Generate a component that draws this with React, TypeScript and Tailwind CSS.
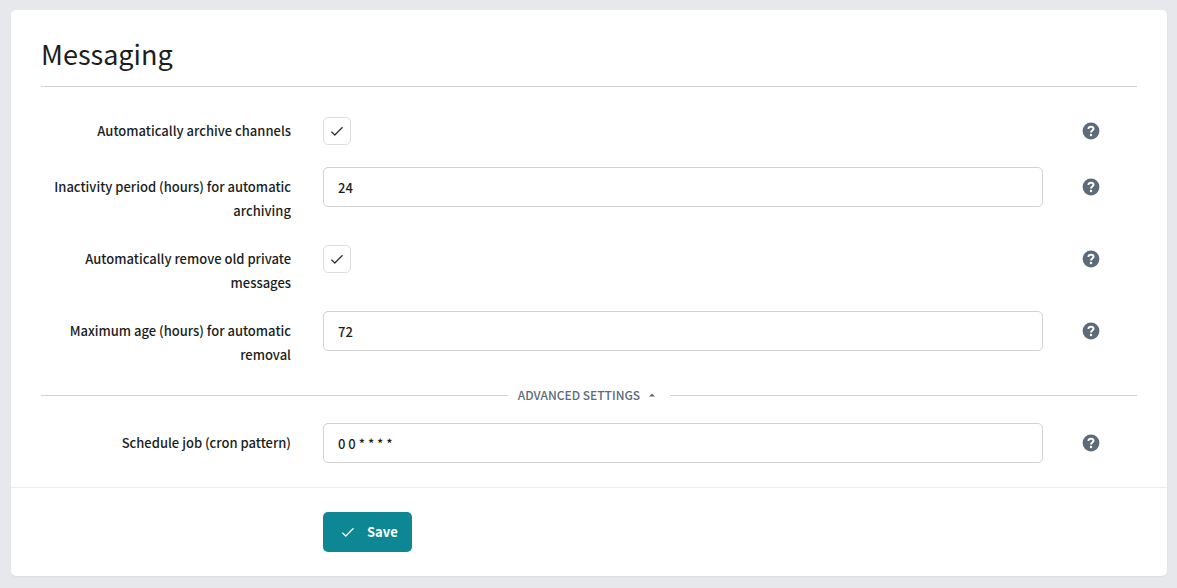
import { useId, useState } from 'react';

function CheckIcon({ className }: { className?: string }) {
  return (
    <svg viewBox="0 0 14 14" fill="none" className={className} aria-hidden="true">
      <path
        d="M1.4 7.7 L4.8 11 L12.5 3.3"
        stroke="currentColor"
        strokeWidth="1.25"
      />
    </svg>
  );
}

function HelpButton({ label }: { label: string }) {
  return (
    <button type="button" aria-label={label} className="block h-10 px-1.5 text-[#5b6b7c]">
      <svg viewBox="0 0 20 20" className="w-5 h-5" aria-hidden="true">
        <circle cx="10" cy="10" r="8.4" fill="currentColor" />
        <path
          d="M7.3 7.8 C7.5 6.4 8.5 5.7 9.9 5.7 C11.5 5.7 12.5 6.6 12.5 7.8 C12.5 9.6 10 9.5 10 11.6"
          fill="none"
          stroke="white"
          strokeWidth="2"
        />
        <circle cx="10" cy="14" r="1.25" fill="white" />
      </svg>
    </button>
  );
}

type RowProps = {
  id: string;
  label: string;
  children: React.ReactNode;
};

function Row({ id, label, children }: RowProps) {
  return (
    <div className="grid grid-cols-12 gap-x-8">
      <label htmlFor={id} className="col-span-3 pt-2 text-right leading-6">
        {label}
      </label>
      <div className="col-span-8">{children}</div>
      <HelpButton label={label} />
    </div>
  );
}

function CheckboxRow({ label }: { label: string }) {
  const id = useId();

  return (
    <Row id={id} label={label}>
      <div className="flex h-10 items-center">
        <span className="relative flex">
          <input
            id={id}
            type="checkbox"
            defaultChecked
            className="peer w-7 h-7 appearance-none rounded-[5px] border border-[#dededf] bg-white"
          />
          <CheckIcon className="pointer-events-none absolute inset-0 m-auto hidden w-3.5 h-3.5 text-[#333] peer-checked:block" />
        </span>
      </div>
    </Row>
  );
}

function TextRow({ label, value }: { label: string; value: string }) {
  const id = useId();

  return (
    <Row id={id} label={label}>
      <input
        id={id}
        type="text"
        defaultValue={value}
        className="block w-full h-10 rounded-[5px] border border-[#d1d2d4] bg-white px-3.5"
      />
    </Row>
  );
}

export default function App() {
  const [advanced, setAdvanced] = useState(true);

  return (
    <div className="min-h-screen bg-[#e7e8ec] pt-2.5 pr-2.5 pb-3 pl-[11px] font-['Noto_Sans_CJK_SC',sans-serif] text-[13px] font-medium text-[#1b1e21]">
      <form
        onSubmit={(e) => e.preventDefault()}
        className="rounded-[5px] bg-white shadow-xs"
      >
        <div className="flex flex-col gap-4 px-[30px] pb-6">
          <h1 className="mb-2 border-b border-[#d1d2d4] pt-6 pb-3 text-[27px] leading-10 font-normal">
            Messaging
          </h1>
          <CheckboxRow label="Automatically archive channels" />
          <TextRow label="Inactivity period (hours) for automatic archiving" value="24" />
          <CheckboxRow label="Automatically remove old private messages" />
          <TextRow label="Maximum age (hours) for automatic removal" value="72" />

          <div className="flex items-center">
            <span className="flex-1 h-px bg-[#d1d2d4]" />
            <button
              type="button"
              aria-expanded={advanced}
              onClick={() => setAdvanced(!advanced)}
              className="flex items-center gap-2 pl-2.5 pr-3.5 text-xs leading-6 text-[#5b6b7c] uppercase"
            >
              Advanced settings
              <svg viewBox="0 0 8 4" className="w-2 h-1" aria-hidden="true">
                <path d="M1 3.6 L4 0.4 L7 3.6 Z" fill="currentColor" />
              </svg>
            </button>
            <span className="flex-1 h-px bg-[#d1d2d4]" />
          </div>
          {advanced && <TextRow label="Schedule job (cron pattern)" value="0 0 * * * *" />}
        </div>

        <div className="border-t border-[#ebecee] px-[30px] py-6">
          <div className="grid grid-cols-12 gap-x-8">
            <div className="col-span-9 col-start-4">
              <button
                type="submit"
                className="flex h-10 items-center gap-3 rounded-[5px] bg-[#0c8793] pl-[18px] pr-3.5 font-bold text-white"
              >
                <CheckIcon className="w-3.5 h-3.5" />
                Save
              </button>
            </div>
          </div>
        </div>
      </form>
    </div>
  );
}
